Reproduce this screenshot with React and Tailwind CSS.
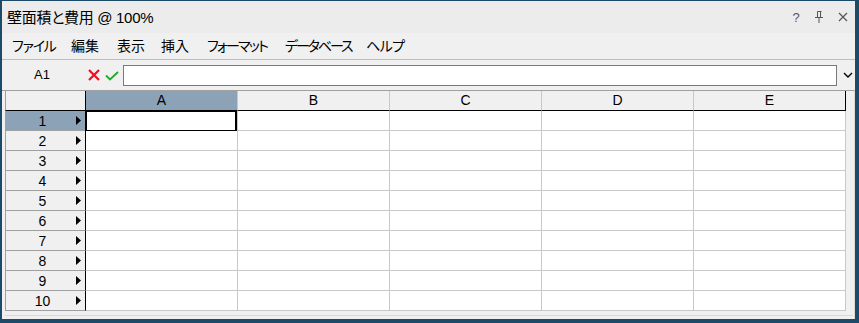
const menus = [
  { label: "ファイル", w: "w-[59px] tracking-[-1.2px]" },
  { label: "編集", w: "w-[46px]" },
  { label: "表示", w: "w-[44px]" },
  { label: "挿入", w: "w-[46px]" },
  { label: "フォーマット", w: "w-[78px] tracking-[-1.8px]" },
  { label: "データベース", w: "w-[81px] tracking-[-2.1px]" },
  { label: "ヘルプ", w: "w-[50px] tracking-[-0.6px]" },
];

const cols = ["A", "B", "C", "D", "E"];
const rows = [1, 2, 3, 4, 5, 6, 7, 8, 9, 10];

function RowArrow() {
  return (
    <svg width="5" height="9" viewBox="0 0 5 9" className="shrink-0">
      <path d="M0 0L5 4.5L0 9z" fill="#000" />
    </svg>
  );
}

export default function App() {
  return (
    <div className="w-[859px] h-[323px] bg-[#1c4a68] pt-px pl-[2px] pr-[4px] pb-[4px] font-['Liberation_Sans','Noto_Sans_CJK_JP',sans-serif] text-black overflow-hidden">
      <div className="h-full flex flex-col bg-[#f0f0f0]">

        {/* Title bar */}
        <div className="h-[32px] shrink-0 flex items-center bg-[#ececec] pl-[5px]">
          <div className="text-[15px] leading-none flex-1 tracking-[-0.3px] [font-feature-settings:'palt']">壁面積と費用 @ 100%</div>
          <div className="flex items-center text-[#555]">
            <span className="w-[12px] text-center text-[13px] leading-none">?</span>
            <svg width="10" height="12" viewBox="0 0 10 12" className="ml-[12px]">
              <path d="M3.5 0.5H7.5M3.5 0.5V6.5M6.5 0.5V6.5M1 6.5H9M5 6.5V12" stroke="#555" strokeWidth="1" fill="none" />
            </svg>
            <svg width="10" height="10" viewBox="0 0 10 10" className="ml-[14px] mr-[7px]">
              <path d="M1 1L9 9M9 1L1 9" stroke="#555" strokeWidth="1.2" fill="none" />
            </svg>
          </div>
        </div>

        {/* Menu bar */}
        <div className="h-[26px] shrink-0 flex items-center pl-[10px] text-[14px] border-b border-[#bdbdbd] box-content [font-feature-settings:'palt']">
          {menus.map((m) => (
            <div key={m.label} className={`${m.w} whitespace-nowrap leading-none`}>
              {m.label}
            </div>
          ))}
        </div>

        {/* Formula bar */}
        <div className="h-[30px] shrink-0 flex items-center">
          <div className="w-[80px] text-center text-[13px]">A1</div>
          <svg width="12" height="12" viewBox="0 0 12 12" className="ml-[6px]">
            <path d="M1 1L11 11M11 1L1 11" stroke="#e81123" strokeWidth="2.2" fill="none" />
          </svg>
          <svg width="14" height="10" viewBox="0 0 14 10" className="ml-[5px] mt-[2px]">
            <path d="M1 4.5L5 8.5L13 1" stroke="#1cab2a" strokeWidth="1.8" fill="none" />
          </svg>
          <div className="ml-[4px] w-[714px] h-[21px] bg-white border border-[#7a7a7a]"></div>
          <svg width="10" height="6" viewBox="0 0 10 6" className="ml-[6px]">
            <path d="M1 1L5 5L9 1" stroke="#000" strokeWidth="1.4" fill="none" />
          </svg>
        </div>

        {/* Grid */}
        <div className="flex-1 border-t border-[#a0a0a0] pl-[3px] border-r border-r-[#dadada]">
          <div className="grid grid-cols-[81px_repeat(5,152px)] grid-rows-[repeat(11,20px)] w-[841px]">
            <div className="bg-[#f0f0f0] border-l border-[#a0a0a0] border-r border-r-black border-b border-b-black"></div>
            {cols.map((c, i) => (
              <div
                key={c}
                className={`flex items-center justify-center text-[14px] border-b border-b-black ${
                  i === 0 ? "bg-[#8ca2b6]" : "bg-[#f0f0f0]"
                } ${i === 4 ? "border-r border-r-black" : "border-r border-r-[#c8c8c8]"}`}
              >
                {c}
              </div>
            ))}
            {rows.map((r) => (
              <div key={r} className="contents">
                <div
                  className={`flex items-center pr-[4px] border-l border-[#a0a0a0] border-r border-r-black border-b border-b-[#a0a0a0] ${
                    r === 1 ? "bg-[#8ca2b6]" : "bg-[#f0f0f0]"
                  }`}
                >
                  <span className="flex-1 text-center text-[14px] leading-none pl-[3px]">{r}</span>
                  <RowArrow />
                </div>
                {cols.map((c) => (
                  <div key={c} className="relative bg-white border-r border-b border-[#c8c8c8]">
                    {r === 1 && c === "A" && (
                      <div className="absolute -top-px -left-px right-0 -bottom-[2px] border-2 border-black"></div>
                    )}
                  </div>
                ))}
              </div>
            ))}
          </div>
          <div className="h-[5px] border-b border-[#dadada] mr-[1px]"></div>
        </div>
      </div>
    </div>
  );
}
